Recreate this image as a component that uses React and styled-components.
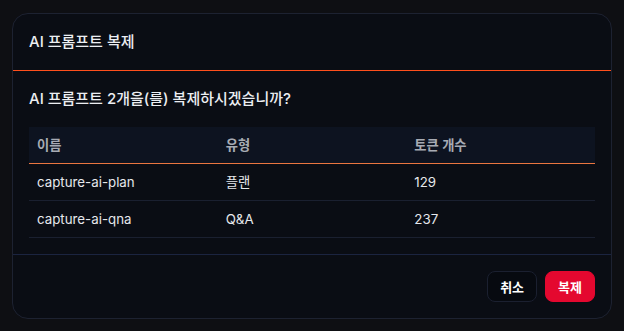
import React from "react";
import styled, { createGlobalStyle } from "styled-components";

const Global = createGlobalStyle`
  html, body { margin: 0; padding: 0; background: #0e0f13; }
  body { font-family: "Inter", "Noto Sans CJK KR", sans-serif; color: #e9eaee; }
  * { box-sizing: border-box; }
`;

const Page = styled.div`
  width: 624px;
  height: 331px;
  padding: 13px 12px 0 12px;
`;

const Dialog = styled.div`
  width: 600px;
  background: #0a0d14;
  border: 1px solid #1d2231;
  border-radius: 16px;
  display: flex;
  flex-direction: column;
  overflow: hidden;
`;

const Header = styled.div`
  padding: 16px;
  border-bottom: 1px solid #ff4f1c;
`;

const Title = styled.h2`
  margin: 0;
  font-size: 15px;
  line-height: 24px;
  font-weight: 500;
  color: #eceef2;
`;

const Body = styled.div`
  padding: 16px;
  display: flex;
  flex-direction: column;
  gap: 16px;
  border-bottom: 1px solid #1b2440;
`;

const Question = styled.p`
  margin: 0;
  font-size: 15px;
  line-height: 24px;
  font-weight: 500;
  color: #eceef2;
`;

const Table = styled.table`
  width: 100%;
  border-collapse: collapse;
  table-layout: fixed;
  font-size: 13.3px;
`;

const Th = styled.th`
  text-align: left;
  height: 36px;
  padding: 0 8px;
  background: #0d1320;
  color: #a7abb3;
  font-weight: 600;
  border-bottom: 1px solid #ea7640;
`;

const Td = styled.td`
  height: 37px;
  padding: 0 8px;
  color: #e6e8ec;
  font-weight: 400;
  border-bottom: 1px solid #1a2030;
`;

const Footer = styled.div`
  padding: 16px;
  display: flex;
  justify-content: flex-end;
  gap: 8px;
`;

const Button = styled.button`
  height: 31px;
  padding: 0 12px;
  border-radius: 8px;
  font-family: inherit;
  font-size: 13px;
  font-weight: 600;
  cursor: pointer;
  color: #ffffff;
  background: ${(p) => (p.$primary ? "#e4082f" : "#070a10")};
  border: 1px solid ${(p) => (p.$primary ? "#e4082f" : "#1b2030")};
`;

const rows = [
  { name: "capture-ai-plan", type: "플랜", tokens: 129 },
  { name: "capture-ai-qna", type: "Q&A", tokens: 237 },
];

export default function App() {
  return (
    <Page>
      <Global />
      <Dialog>
        <Header>
          <Title>AI 프롬프트 복제</Title>
        </Header>
        <Body>
          <Question>AI 프롬프트 2개을(를) 복제하시겠습니까?</Question>
          <Table>
            <thead>
              <tr>
                <Th>이름</Th>
                <Th>유형</Th>
                <Th>토큰 개수</Th>
              </tr>
            </thead>
            <tbody>
              {rows.map((r) => (
                <tr key={r.name}>
                  <Td>{r.name}</Td>
                  <Td>{r.type}</Td>
                  <Td>{r.tokens}</Td>
                </tr>
              ))}
            </tbody>
          </Table>
        </Body>
        <Footer>
          <Button>취소</Button>
          <Button $primary>복제</Button>
        </Footer>
      </Dialog>
    </Page>
  );
}
